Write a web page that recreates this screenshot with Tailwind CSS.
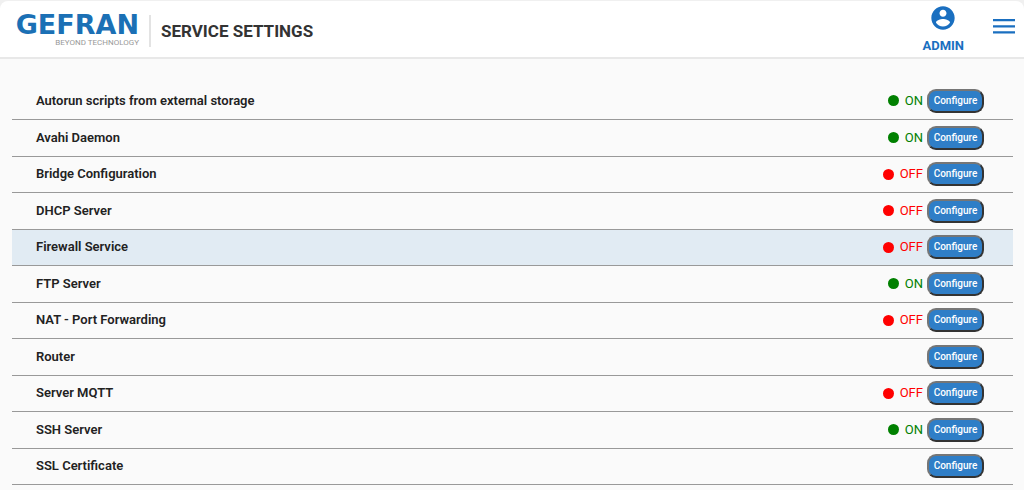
<!DOCTYPE html>
<html lang="en">
<head>
  <meta charset="UTF-8">
  <meta name="viewport" content="width=device-width, initial-scale=1.0">
  <title>Service Settings</title>
  <script src="https://cdn.jsdelivr.net/npm/@tailwindcss/browser@4"></script>
</head>
<body class="bg-[#f0f0f0] font-[Roboto,sans-serif] text-[#222]">

  <div class="min-h-screen pt-px">
    <header class="flex h-[58px] items-center justify-between rounded-t-lg border-b-2 border-[#e8e8e8] bg-white pl-3 pr-2">
      <div class="flex items-center pt-1">
        <a href="#" class="flex w-[127px] flex-col items-end">
          <span class="font-['DejaVu_Sans',sans-serif] text-[27px] font-bold leading-6 text-[#1b70b5]">GEFRAN</span>
          <span class="whitespace-nowrap text-[8px] leading-3 text-[#999]">BEYOND TECHNOLOGY</span>
        </a>
        <div class="ml-2.5 h-8 w-0.5 bg-[#e3e3e3]"></div>
        <h1 class="ml-2.5 text-[17px] font-bold leading-6 text-[#333]">SERVICE SETTINGS</h1>
      </div>
      <div class="flex items-center gap-7">
        <a href="#" class="flex flex-col items-center gap-1 pt-0.5 text-[#1a6fc0]">
          <svg class="size-7" viewBox="0 0 24 24" fill="currentColor">
            <path d="M12 2C6.48 2 2 6.48 2 12s4.48 10 10 10 10-4.48 10-10S17.520 2 12 2zm0 3c1.660 0 3 1.340 3 3s-1.340 3-3 3-3-1.340-3-3 1.340-3 3-3zm0 14.200c-2.500 0-4.710-1.280-6-3.220.030-1.990 4-3.080 6-3.080 1.990 0 5.970 1.090 6 3.080-1.290 1.940-3.500 3.220-6 3.220z"/>
          </svg>
          <span class="text-[13px] font-bold leading-5">ADMIN</span>
        </a>
        <button type="button" aria-label="Menu" class="pb-1 text-[#1a6fc0]">
          <svg class="h-5 w-6" viewBox="0 0 24 20" fill="currentColor">
            <path d="M1 2h22v2.300H1zM1 8.200h22v2.300H1zM1 14.300h22v2.300H1z"/>
          </svg>
        </button>
      </div>
    </header>

    <main class="min-h-[calc(100vh-59px)] bg-[#fafafa] pl-3 pr-[11px] pt-6">
      <table class="w-full">
        <tbody id="services"></tbody>
      </table>
    </main>
  </div>

  <script>
    const services = [
      { name: 'Autorun scripts from external storage', status: 'ON' },
      { name: 'Avahi Daemon', status: 'ON' },
      { name: 'Bridge Configuration', status: 'OFF' },
      { name: 'DHCP Server', status: 'OFF' },
      { name: 'Firewall Service', status: 'OFF', selected: true },
      { name: 'FTP Server', status: 'ON' },
      { name: 'NAT - Port Forwarding', status: 'OFF' },
      { name: 'Router' },
      { name: 'Server MQTT', status: 'OFF' },
      { name: 'SSH Server', status: 'ON' },
      { name: 'SSL Certificate' },
    ];
    const table = document.getElementById('services');

    services.forEach(service => {
      const color = service.status === 'ON' ? 'text-[#008000]' : 'text-[#ff0000]';
      const status = service.status ? `
        <span class="size-[11px] rounded-full bg-current ${color}"></span>
        <span class="ml-1.5 mr-1 text-[13px] ${color}">${service.status}</span>` : '';
      const row = document.createElement('tr');
      row.className = 'border-b border-[#999] odd:h-[36px] even:h-[37px]';
      if (service.selected) row.classList.add('bg-[#e1ebf3]');
      row.innerHTML = `
        <td class="p-0 pl-6 text-[13px] font-semibold leading-5">${service.name}</td>
        <td class="p-0 pr-[29px]">
          <div class="flex items-center justify-end leading-5">
            ${status}
            <button type="button" class="h-6 w-[57px] rounded-[9px] border-2 border-b-[#333] border-l-[#767676] border-r-[#333] border-t-[#767676] bg-[#2f7ec7] text-[10px] font-medium leading-5 text-white">Configure</button>
          </div>
        </td>`;
      table.appendChild(row);
    });
  </script>

</body>
</html>
